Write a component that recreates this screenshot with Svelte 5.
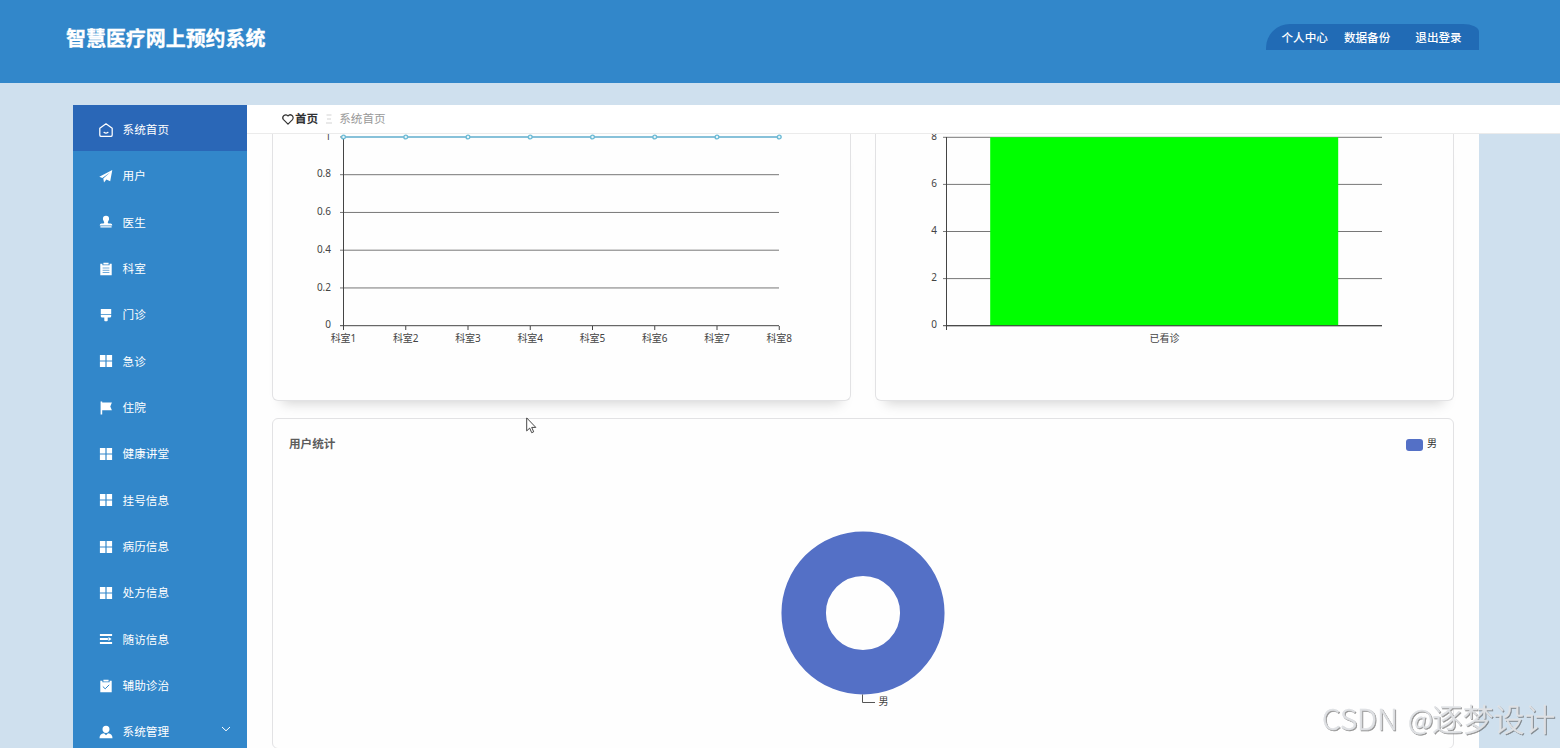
<script>
  const menu = [
    { label: '系统首页', icon: 'home', active: true },
    { label: '用户', icon: 'plane' },
    { label: '医生', icon: 'stamp' },
    { label: '科室', icon: 'clipboard' },
    { label: '门诊', icon: 'brush' },
    { label: '急诊', icon: 'grid' },
    { label: '住院', icon: 'flag' },
    { label: '健康讲堂', icon: 'grid' },
    { label: '挂号信息', icon: 'grid' },
    { label: '病历信息', icon: 'grid' },
    { label: '处方信息', icon: 'grid' },
    { label: '随访信息', icon: 'lines' },
    { label: '辅助诊治', icon: 'check' },
    { label: '系统管理', icon: 'person', sub: true }
  ];
  const depts = [1, 2, 3, 4, 5, 6, 7, 8].map((n, i) => ({ name: '科室' + n, x: 70.5 + i * 62.25 }));
  const lineTicks = ['0', '0.2', '0.4', '0.6', '0.8', '1'].map((t, i) => ({ t, y: 191.7 - i * 37.75 }));
  const barTicks = ['0', '2', '4', '6', '8'].map((t, i) => ({ t, y: 191.7 - i * 47.1 }));
</script>

<div class="page">
  <header>
    <h1>智慧医疗网上预约系统</h1>
    <nav class="user-nav">
      <span>个人中心</span><span>数据备份</span><span class="logout">退出登录</span>
    </nav>
  </header>

  <div class="body">
    <aside>
      {#each menu as m}
        <div class="item" class:active={m.active} class:sub={m.sub}>
          <svg class="icon" viewBox="0 0 14 14" width="14" height="14">
            {#if m.icon === 'home'}
              <path d="M.8 5.300 7 .800l6.200 4.500V12q0 1.400-1.400 1.400H2.200Q.8 13.400.8 12z M5 9.300q2 1.600 4 0" fill="none" stroke="#fff" stroke-width="1.250" stroke-linejoin="round" stroke-linecap="round" />
            {:else if m.icon === 'plane'}
              <path d="M.3 7.700 13.300.900 11.200 12.200 7.400 10.400 5 13.400 4.300 9.500 11 3.600 3.300 8.900z" />
            {:else if m.icon === 'stamp'}
              <path d="M7 .8a3.100 3.100 0 0 1 3.100 3.100c0 1.400-1.300 2.300-1.300 3.600 0 .8.600 1.100 1.500 1.100h1.200q1.800 0 1.800 2H.7q0-2 1.800-2h1.200c.900 0 1.500-.3 1.500-1.100 0-1.300-1.300-2.200-1.300-3.600A3.100 3.100 0 0 1 7 .8zM1.400 11.200h11.200v1.400H1.400z" />
            {:else if m.icon === 'clipboard'}
              <path d="M1.300 1.800h2.100v1.500h7.200V1.800h2.100v11.400H1.300z M4.400.8h5.200v1.800H4.400z" />
              <path d="M3.600 6h6.800M3.600 8.300h6.800M3.600 10.500h6.800" stroke="#3287ca" stroke-width=".7" />
            {:else if m.icon === 'brush'}
              <path d="M1.800.9h10.400v5.400H1.800zM1.800 7h10.400v1.200q0 1.300-1.300 1.300H8.700v2.800q0 .9-.8.9H6.100q-.8 0-.8-.9V9.500H3.100q-1.300 0-1.300-1.300z" />
            {:else if m.icon === 'grid'}
              <path d="M.9 1.100h5.500v5.500H.9zM7.600 1.100h5.500v5.500H7.600zM.9 7.600h5.500v5.500H.9zM7.600 7.600h5.500v5.500H7.600z" />
            {:else if m.icon === 'flag'}
              <path d="M1.600.6h1.600v.9h9.700l-1.600 4 1.600 3.700H3.200v4.400H1.600z" />
            {:else if m.icon === 'lines'}
              <path d="M.9 2.100h12.200v2H.9zM.9 6h8v2h-8zM9.500 4.900 12.600 7 9.500 9.100zM.9 9.900h12.200v2H.9z" />
            {:else if m.icon === 'check'}
              <path d="M1.300 1.800h2.100v1.500h7.200V1.800h2.100v11.400H1.300z M4.400.8h5.200v1.800H4.400z" />
              <path d="m3.800 7.500 2.400 2.300 4-4" fill="none" stroke="#3287ca" />
            {:else}
              <path d="M7 .8a3.500 3.500 0 0 1 3.500 3.500C10.500 6.200 9.200 8 7 8S3.500 6.200 3.500 4.300A3.500 3.500 0 0 1 7 .8zM.5 13.200q0-4.700 4.500-5L7 10.200l2-2q4.500.3 4.500 5z" />
            {/if}
          </svg>
          <span>{m.label}</span>
          {#if m.sub}
            <svg class="chevron" viewBox="0 0 10 6" width="10" height="6"><path d="M1 1l4 3.800L9 1" fill="none" stroke="#fff" stroke-width="1" /></svg>
          {/if}
        </div>
      {/each}
    </aside>

    <main>
      <div class="crumbs">
        <svg viewBox="0 0 12 11" width="12" height="11"><path d="M6 10.200 1.500 5.600A2.750 2.750 0 0 1 6 2a2.750 2.750 0 0 1 4.500 3.600z" fill="none" stroke="#333" stroke-width="1.200" stroke-linejoin="round" /></svg>
        <b>首页</b>
        <svg class="sep" viewBox="0 0 6 10" width="6" height="10"><path d="M.5 1h5M1 5h4M0 9h6" stroke="#c8c8c8" stroke-width=".8" /></svg>
        <span>系统首页</span>
      </div>

      <div class="content">
        <div class="row">
          <section class="card">
            <svg class="chart" viewBox="0 0 577 267" width="577" height="267">
              {#each lineTicks as k}
                <path d="M67 {k.y}H506" class={k.t === '0' ? 'axis' : 'rule'} />
                <text x="58" y={k.y + 2.6} text-anchor="end">{k.t}</text>
              {/each}
              <path d="M70.500 3V196" class="axis" />
              {#each depts as d}
                <path d="M{d.x} 192v4" class="axis" />
                <text x={d.x} y="207.500" text-anchor="middle">{d.name}</text>
              {/each}
              <path d="M70.500 3H506" stroke="#87c1d9" stroke-width="2" />
              {#each depts as d}
                <circle cx={d.x} cy="3" r="1.900" fill="#e8f5fa" stroke="#6dbbd5" stroke-width="1.400" />
              {/each}
            </svg>
          </section>
          <section class="card">
            <svg class="chart" viewBox="0 0 577 267" width="577" height="267">
              {#each barTicks as k}
                <path d="M67 {k.y}H506" class={k.t === '0' ? 'axis' : 'rule'} />
                <text x="61" y={k.y + 2.6} text-anchor="end">{k.t}</text>
              {/each}
              <path d="M70.500 3V196" class="axis" />
              <rect x="114.200" y="3.200" width="348" height="188.500" fill="#0f0" />
              <path d="M70 191.700H506" class="axis" />
              <text x="288.500" y="207.500" text-anchor="middle">已看诊</text>
            </svg>
          </section>
        </div>

        <section class="card users">
          <div class="card-head">
            <strong>用户统计</strong>
            <div class="legend"><i></i>男</div>
          </div>
          <svg class="donut" viewBox="0 0 164 180" width="164" height="180">
            <circle cx="82" cy="82" r="59.300" fill="none" stroke="#5470c6" stroke-width="44.500" />
            <path d="M81.500 163.500v8h12.500" fill="none" stroke="#555" />
            <text x="97.500" y="173.500">男</text>
          </svg>
        </section>
      </div>
    </main>
  </div>

  <svg class="watermark" viewBox="0 0 238 48" width="238" height="48">
    <text x="2" y="31" font-size="29" textLength="76" lengthAdjust="spacingAndGlyphs">CSDN</text>
    <text x="88" y="31" font-size="28" textLength="25" lengthAdjust="spacingAndGlyphs">@</text>
    <text x="112" y="32" font-size="30.800">逐梦设计</text>
  </svg>
  <svg class="cursor" viewBox="0 0 11 17" width="11" height="17"><path d="M.7.900v13l3-2.800 2 4.600 2-.9-2-4.400h4.100z" fill="#fff" stroke="#333" stroke-width=".9" /></svg>
</div>

<style>
  :global(body) { margin: 0; overflow: hidden; }
  * { box-sizing: border-box; }
  .page {
    position: relative;
    display: flex;
    flex-direction: column;
    width: 1560px;
    height: 748px;
    overflow: hidden;
    background: #cfe0ee;
    font-family: 'Noto Sans', 'Noto Sans CJK SC', sans-serif;
    font-size: 11.6px;
  }
  header {
    display: flex;
    flex: none;
    justify-content: space-between;
    align-items: flex-start;
    height: 83px;
    padding: 24px 81px 0 66px;
    background: #3287ca;
    color: #fff;
  }
  h1 {
    margin: 1px 0 0;
    font-size: 19.95px;
    line-height: 28px;
    font-weight: 700;
    -webkit-text-stroke: 0.3px #fff;
  }
  .user-nav {
    display: flex;
    gap: 16px;
    width: 213px;
    height: 26px;
    padding-left: 15.500px;
    border-radius: 24px 16px 0 0 / 24px 8px 0 0;
    background: #216bb5;
    line-height: 27px;
    font-weight: 500;
    white-space: nowrap;
  }
  .logout { margin-left: 9px; }
  .body { display: flex; flex: 1; min-height: 0; padding: 22px 0 0 73px; }
  aside { flex: none; width: 174px; background: #3287ca; color: #fff; overflow: hidden; }
  .item {
    display: flex;
    align-items: center;
    height: 46.350px;
    padding: 3px 16px 0 26px;
  }
  .item span { margin-top: -1.400px; }
  .item.active { background: #2a67b7; }
  .item.sub { padding-top: 2px; }
  .icon { flex: none; margin-right: 9.600px; fill: #fff; }
  .chevron { margin: -5px 0 0 auto; }
  main { display: flex; flex: 1; flex-direction: column; min-width: 0; }
  .crumbs {
    display: flex;
    flex: none;
    align-items: center;
    height: 29px;
    padding-left: 35px;
    border-bottom: 1px solid #ebebeb;
    background: #fff;
    color: #999;
  }
  .crumbs b, .crumbs span { margin-top: -2px; }
  .crumbs b { margin-left: 1px; color: #303133; }
  .crumbs .sep { margin: 0 7px 0 8px; }
  .content { flex: 1; width: 1232px; padding: 0 25px; background: #fefefe; }
  .row { display: flex; justify-content: space-between; }
  .card {
    width: 579px;
    height: 267px;
    border: 1px solid #e2e2e4;
    border-top: 0;
    border-radius: 0 0 6px 6px;
    background: #fefefe;
    box-shadow: 0 12px 12px -10px rgba(0, 0, 0, .18);
  }
  .chart { display: block; }
  .axis, .rule { fill: none; stroke: #444; }
  .rule { stroke: #777; }
  .chart text, .donut text { font-size: 10px; fill: #444; }
  .users {
    display: flex;
    flex-direction: column;
    align-items: center;
    width: 1182px;
    height: 331px;
    margin-top: 17px;
    border-top: 1px solid #e2e2e4;
    border-radius: 6px;
    box-shadow: none;
  }
  .card-head {
    display: flex;
    justify-content: space-between;
    width: 100%;
    padding: 16px 16px 0;
    line-height: 17px;
    color: #5c5c5c;
  }
  .legend { display: flex; align-items: center; gap: 4px; font-size: 10px; color: #333; }
  .legend i { width: 17px; height: 12px; margin-top: 2px; border-radius: 3px; background: #5470c6; }
  .donut { flex: none; margin-top: 79px; }
  .watermark {
    position: absolute;
    left: 1320px;
    top: 699px;
    overflow: visible;
    font-family: 'Noto Sans CJK SC', sans-serif;
    font-weight: 300;
    fill: #dfe1e4;
    stroke: #dfe1e4;
    stroke-width: .5px;
    filter: drop-shadow(1px 1px 0.7px rgba(80, 80, 80, .6));
  }
  .cursor { position: absolute; left: 526px; top: 417px; }
</style>
